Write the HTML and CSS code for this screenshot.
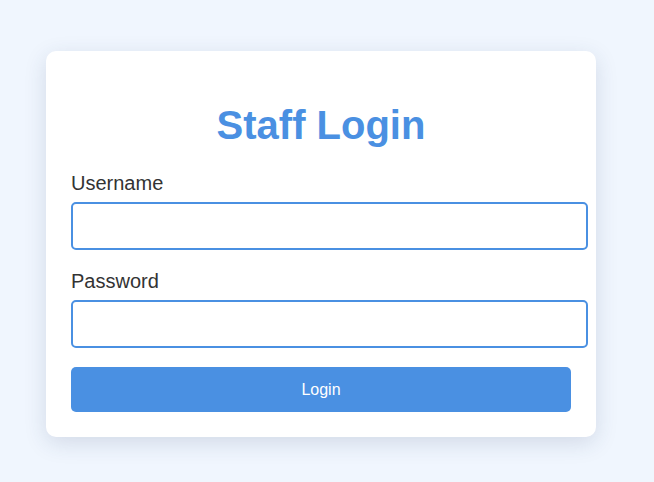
FILE: index.html
```html
<!DOCTYPE html>
<html lang="en">
<head>
<meta charset="utf-8">
<title>Staff Login</title>
<link rel="stylesheet" href="styles.css">
</head>
<body>
<div class="card">
  <h1 class="title">Staff Login</h1>
  <form class="form">
    <div class="group">
      <label class="label" for="username">Username</label>
      <input class="input" id="username" type="text">
    </div>
    <div class="group">
      <label class="label" for="password">Password</label>
      <input class="input" id="password" type="password">
    </div>
    <button class="button" type="button">Login</button>
  </form>
</div>
</body>
</html>
```
FILE: styles.css
```css
html {
  margin: 0;
  padding: 0;
  background: #f0f6fe;
  min-height: 100%;
}
body {
  margin: 0;
  min-height: 100vh;
  box-sizing: border-box;
  font-family: "Liberation Sans", Arial, sans-serif;
  color: #333;
  padding: 51px 0 0 46px;
}
.card {
  width: 500px;
  padding: 25px;
  background: #fff;
  border-radius: 10px;
  box-shadow: 0 6px 22px rgba(40, 60, 100, 0.15);
}
.title {
  margin: 26px 0 24px;
  text-align: center;
  font-size: 40px;
  font-weight: bold;
  color: #4a90e2;
  line-height: 46px;
}
.form {
  margin: 0;
}
.group {
  margin-bottom: 20px;
}
.group:nth-child(2) {
  margin-bottom: 19px;
}
.label {
  display: block;
  font-size: 20px;
  line-height: 23px;
  margin-bottom: 7px;
  color: #333;
}
.input {
  display: block;
  box-sizing: content-box;
  width: 100%;
  height: 44px;
  padding: 0 6.5px;
  border: 2px solid #4a90e2;
  border-radius: 5px;
  font-size: 16px;
  font-family: inherit;
  background: #fff;
  outline: none;
}
.button {
  display: block;
  width: 100%;
  height: 45px;
  border: none;
  border-radius: 5px;
  background: #4a90e2;
  color: #fff;
  font-family: inherit;
  font-size: 16px;
}
```
